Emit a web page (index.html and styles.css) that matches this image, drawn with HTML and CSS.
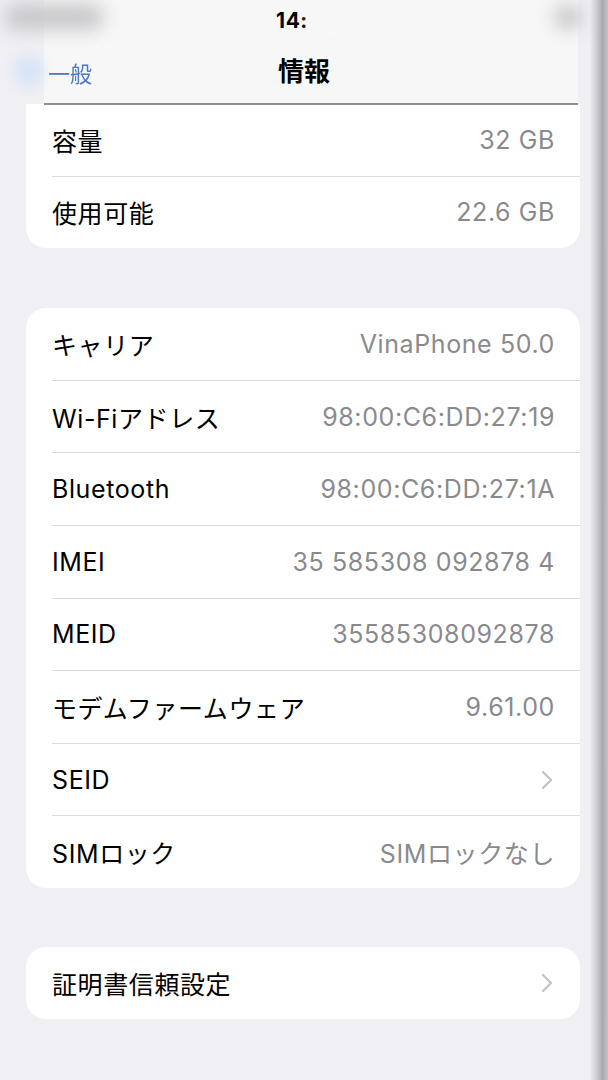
FILE: index.html
```html
<!DOCTYPE html>
<html lang="ja">
<head>
    <meta charset="UTF-8">
    <meta name="viewport" content="width=device-width, initial-scale=1.0">
    <title>情報</title>
    <link rel="stylesheet" href="styles.css">
</head>
<body>
    <div class="screen">
        <div class="main">
            <!-- ステータスバー + ナビゲーション -->
            <div class="topbar">
                <div class="status">
                    <span class="blob blob-left"></span>
                    <span class="time">14:<span class="smudge"></span></span>
                    <span class="blob blob-right"></span>
                </div>
                <div class="nav">
                    <span class="back"><span class="back-glow"></span>一般</span>
                    <span class="title">情報</span>
                    <span class="nav-spacer"></span>
                </div>
            </div>

            <div class="group group-first">
                <div class="row"><span class="label">容量</span><span class="value">32 GB</span></div>
                <div class="row"><span class="label">使用可能</span><span class="value">22.6 GB</span></div>
            </div>

            <div class="group">
                <div class="row"><span class="label">キャリア</span><span class="value">VinaPhone 50.0</span></div>
                <div class="row"><span class="label">Wi-Fiアドレス</span><span class="value">98:00:C6:DD:27:19</span></div>
                <div class="row"><span class="label">Bluetooth</span><span class="value">98:00:C6:DD:27:1A</span></div>
                <div class="row"><span class="label">IMEI</span><span class="value">35 585308 092878 4</span></div>
                <div class="row"><span class="label">MEID</span><span class="value">35585308092878</span></div>
                <div class="row"><span class="label">モデムファームウェア</span><span class="value">9.61.00</span></div>
                <div class="row">
                    <span class="label">SEID</span>
                    <svg class="chevron" viewBox="0 0 12 20" width="12" height="20"><path d="M2 2l8 8-8 8" fill="none" stroke="#c4c4c7" stroke-width="2.4" stroke-linecap="round" stroke-linejoin="round"/></svg>
                </div>
                <div class="row"><span class="label">SIMロック</span><span class="value">SIMロックなし</span></div>
            </div>

            <div class="group">
                <div class="row">
                    <span class="label">証明書信頼設定</span>
                    <svg class="chevron" viewBox="0 0 12 20" width="12" height="20"><path d="M2 2l8 8-8 8" fill="none" stroke="#c4c4c7" stroke-width="2.4" stroke-linecap="round" stroke-linejoin="round"/></svg>
                </div>
            </div>
        </div>
        <div class="edge"></div>
    </div>
</body>
</html>
```

FILE: styles.css
```css
body {
    margin: 0;
    background-color: #efeff4;
    font-family: Inter, "Noto Sans CJK JP", sans-serif;
    color: #000;
}
.screen {
    display: flex;
    height: 1080px;
    overflow: hidden;
}
.main {
    width: 590px;
}
.edge {
    flex: 1;
    background: linear-gradient(to right, #eeeef2 0%, #c9c9ce 40%, #a9a9ae 70%, #c4c4c8 100%);
}

/* верх */
.topbar {
    background-color: #f7f7f7;
    height: 103px;
    border-bottom: 2px solid #8e8e92;
    margin-left: 44px;
    margin-right: 12px;
    position: relative;
}
.status {
    height: 40px;
    display: flex;
    justify-content: center;
    align-items: center;
}
.time {
    font-size: 21px;
    font-weight: 700;
    letter-spacing: 0.5px;
    margin-left: -38px;
    position: relative;
}
.smudge {
    position: absolute;
    left: 32px;
    top: -6px;
    width: 34px;
    height: 34px;
    border-radius: 50%;
    background: #f7f7f7;
    filter: blur(4px);
}
.blob {
    position: absolute;
    top: 4px;
    height: 26px;
    border-radius: 13px;
    background: #c8c8cb;
    filter: blur(9px);
}
.blob-left {
    left: -40px;
    width: 100px;
}
.blob-right {
    left: 510px;
    width: 28px;
}
.nav {
    height: 58px;
    display: flex;
    align-items: center;
    justify-content: space-between;
}
.back {
    width: 60px;
    color: #4a78c4;
    font-size: 22px;
    margin-left: 4px;
    margin-top: 6px;
    filter: blur(0.6px);
    position: relative;
}
.back-glow {
    position: absolute;
    left: -34px;
    top: 0;
    width: 30px;
    height: 30px;
    border-radius: 50%;
    background: #d9e4f6;
    filter: blur(6px);
}
.title {
    font-size: 26px;
    font-weight: 700;
    margin-right: 18px;
}
.nav-spacer {
    width: 60px;
}

/* группы */
.group {
    background-color: #fff;
    border-radius: 20px;
    margin: 0 10px 59px 26px;
}
.group-first {
    border-radius: 0 0 20px 20px;
    margin-top: -1px;
    margin-bottom: 60px;
}
.row {
    height: 71.6px;
    display: flex;
    align-items: center;
    justify-content: space-between;
    margin-left: 26px;
    padding-right: 26px;
    border-top: 1px solid #dcdce0;
}
.row:first-child {
    border-top: none;
}
.label,
.value {
    font-size: 25px;
    letter-spacing: 0.6px;
}
.value {
    color: #8a8a8e;
    margin-right: -1px;
}
.chevron {
    margin-right: 1px;
}
```
